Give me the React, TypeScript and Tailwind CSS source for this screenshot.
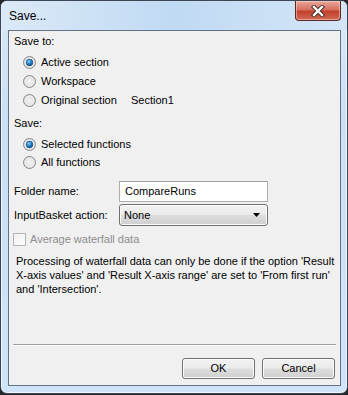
const font = { fontFamily: '"Liberation Sans", Arial, sans-serif' };

function Radio({ checked }: { checked?: boolean }) {
  return (
    <svg width="13" height="13" viewBox="0 0 13 13" className="shrink-0">
      <defs>
        <radialGradient id="rbg" cx="50%" cy="50%" r="55%">
          <stop offset="0%" stopColor="#f6f6f6" />
          <stop offset="100%" stopColor="#d4d4d4" />
        </radialGradient>
        <radialGradient id="rdot" cx="40%" cy="35%" r="70%">
          <stop offset="0%" stopColor="#8fd6f8" />
          <stop offset="45%" stopColor="#2a8ad0" />
          <stop offset="100%" stopColor="#0f3f74" />
        </radialGradient>
      </defs>
      <circle cx="6.5" cy="6.5" r="6" fill="url(#rbg)" stroke="#8a8a8a" strokeWidth="1" />
      <circle cx="6.5" cy="6.5" r="4.3" fill="none" stroke="#f8f8f8" strokeWidth="0.8" />
      {checked && <circle cx="6.5" cy="6.5" r="3.4" fill="url(#rdot)" stroke="#1a4a7a" strokeWidth="0.5" />}
    </svg>
  );
}

function RadioRow({ label, checked, h, extra }: { label: string; checked?: boolean; h: string; extra?: string }) {
  return (
    <div className={`flex items-center pl-[14px] ${h}`}>
      <Radio checked={checked} />
      <span className="ml-[5px] w-[90px]">{label}</span>
      {extra && <span>{extra}</span>}
    </div>
  );
}

function WinButton({ label }: { label: string }) {
  return (
    <button className="flex h-[21px] w-[73px] items-center justify-center rounded-[3px] border border-[#707070] bg-[linear-gradient(to_bottom,#f2f2f2_0%,#ebebeb_48%,#dddddd_52%,#cfcfcf_100%)] text-[11px] text-black shadow-[inset_0_0_0_1px_#fcfcfc]">
      {label}
    </button>
  );
}

export default function App() {
  return (
    <div className="h-[395px] w-[348px] bg-[#242628]" style={font}>
      <div className="relative flex h-[394px] w-[348px] flex-col rounded-[7px] border border-[#3c4654] bg-[linear-gradient(to_bottom,#dae9f7,#c9e0f5_30%,#cfe4f8)] shadow-[inset_0_0_0_1px_#eef5fc]">
        <div className="flex h-[29px] items-start justify-between bg-[linear-gradient(to_right,#dbe9f7_0%,#c0daf3_50%,#d3e5f6_100%)] rounded-t-[6px]">
          <span className="ml-[8px] mt-[8px] text-[12px] leading-[14px] text-black">Save...</span>
          <div className="mr-[6px] flex h-[20px] w-[46px] items-center justify-center rounded-b-[4px] border border-t-0 border-[#5b2a22] bg-[linear-gradient(to_bottom,#e9a99c_0%,#d8705f_45%,#c4402e_55%,#d06a55_100%)] shadow-[inset_0_0_0_1px_rgba(255,220,210,0.5)]">
            <svg width="14" height="12" viewBox="0 0 14 12">
              <path d="M3 2 L11 10 M11 2 L3 10" stroke="#3b2a28" strokeWidth="4.2" strokeLinecap="square" />
              <path d="M3 2 L11 10 M11 2 L3 10" stroke="#ffffff" strokeWidth="2.4" strokeLinecap="square" />
            </svg>
          </div>
        </div>
        <div className="ml-[7px] mr-[6px] flex h-[356px] flex-col border border-[#627385] bg-[#f0f0f0] text-[11px] leading-[13px] text-black">
          <div className="mt-[3px] flex h-[14px] items-center pl-[5px]">Save to:</div>
          <div className="mt-[5px]">
            <RadioRow label="Active section" checked h="h-[19px]" />
            <RadioRow label="Workspace" h="h-[19px]" />
            <RadioRow label="Original section" h="h-[19px]" extra="Section1" />
          </div>
          <div className="mt-[6px] flex h-[14px] items-center pl-[5px]">Save:</div>
          <div className="mt-[5px]">
            <RadioRow label="Selected functions" checked h="h-[18px]" />
            <RadioRow label="All functions" h="h-[18px]" />
          </div>
          <div className="mt-[10px] flex h-[21px] items-center pl-[5px]">
            <span className="w-[105px]">Folder name:</span>
            <div className="flex h-[21px] w-[149px] items-center border border-[#abadb3] border-t-[#9ea2a9] bg-white pl-[5px]">
              CompareRuns
            </div>
          </div>
          <div className="mt-[2px] flex h-[22px] items-center pl-[5px]">
            <span className="w-[105px]">InputBasket action:</span>
            <div className="flex h-[22px] w-[149px] items-center justify-between rounded-[3px] border border-[#707070] bg-[linear-gradient(to_bottom,#f2f2f2_0%,#ebebeb_48%,#dddddd_52%,#cfcfcf_100%)] pl-[4px] pr-[7px] shadow-[inset_0_0_0_1px_#fcfcfc]">
              <span>None</span>
              <svg width="7" height="4" viewBox="0 0 7 4">
                <path d="M0 0 H7 L3.5 4 Z" fill="#000" />
              </svg>
            </div>
          </div>
          <div className="mt-[7px] flex h-[13px] items-center pl-[4px]">
            <div className="h-[13px] w-[13px] border border-[#b4b4b4] bg-[linear-gradient(135deg,#f2f2f2,#fbfbfb)]" />
            <span className="ml-[4px] text-[#8d8d8d]">Average waterfall data</span>
          </div>
          <p className="mt-[8px] whitespace-nowrap pl-[7px] leading-[14px]">
            Processing of waterfall data can only be done if the option 'Result
            <br />
            X-axis values' and 'Result X-axis range' are set to 'From first run'
            <br />
            and 'Intersection'.
          </p>
          <div className="mt-auto mx-[4px] border-t border-[#a0a0a0] shadow-[0_1px_0_#ffffff]" />
          <div className="mt-[13px] mb-[6px] flex justify-end gap-[7px] pr-[5px]">
            <WinButton label="OK" />
            <WinButton label="Cancel" />
          </div>
        </div>
      </div>
    </div>
  );
}
